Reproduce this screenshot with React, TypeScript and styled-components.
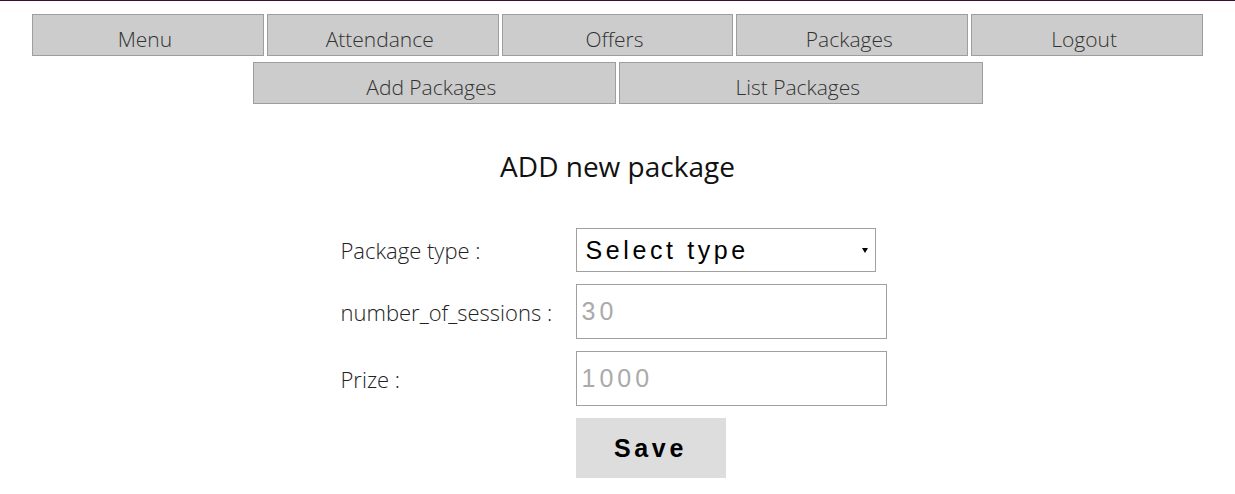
import React from 'react';
import styled, { createGlobalStyle } from 'styled-components';

const GlobalStyle = createGlobalStyle`
  html, body {
    margin: 0;
    padding: 0;
    background: #fff;
  }
  body {
    border-top: 1px solid #3a1030;
    font-family: "Open Sans", "Liberation Sans", sans-serif;
  }
`;

const Page = styled.div`
  display: flex;
  flex-direction: column;
  align-items: center;
  padding-top: 13px;
`;

const NavRow = styled.nav`
  display: flex;
  gap: 3px;
  justify-content: center;
  margin-bottom: 6px;
`;

const NavButton = styled.a<{ $wide?: boolean }>`
  align-items: center;
  background-color: #cccccc;
  border: 1px solid #9e9e9e;
  box-sizing: border-box;
  color: #333;
  cursor: pointer;
  display: flex;
  font-size: 21px;
  font-weight: 300;
  height: 42px;
  justify-content: center;
  padding: 8px 6px 0 0;
  width: ${(p) => (p.$wide ? '363.5px' : '231.8px')};
`;

const Title = styled.h2`
  color: #111;
  font-size: 28px;
  font-weight: 400;
  margin: 37px 0 0;
  text-align: center;
`;

const Form = styled.form`
  display: grid;
  grid-template-columns: 235px 311px;
  row-gap: 12px;
  margin: 43px 8px 0 0;
  align-items: center;
`;

const Label = styled.label`
  color: #222;
  font-size: 22px;
  font-weight: 300;
`;

const SelectWrap = styled.div`
  position: relative;
  width: 300px;

  &::after {
    border-left: 3px solid transparent;
    border-right: 3px solid transparent;
    border-top: 5px solid #000;
    content: '';
    pointer-events: none;
    position: absolute;
    right: 8px;
    top: 20px;
  }
`;

const Select = styled.select`
  appearance: none;
  background: #fff;
  border: 1px solid #a0a0a0;
  border-radius: 0;
  box-sizing: border-box;
  color: #000;
  display: block;
  font-family: "Liberation Sans", Arial, sans-serif;
  font-size: 25px;
  height: 44px;
  letter-spacing: 3.6px;
  padding: 0 0 0 9px;
  width: 100%;
`;

const Input = styled.input`
  border: 1px solid #a0a0a0;
  box-sizing: border-box;
  font-family: "Liberation Sans", Arial, sans-serif;
  font-size: 25px;
  height: 55px;
  letter-spacing: 4px;
  padding: 0 5px;
  width: 311px;

  &::placeholder {
    color: #aaa;
  }
`;

const SaveButton = styled.button`
  background-color: #dddddd;
  border: none;
  color: #000;
  cursor: pointer;
  font-family: "Liberation Sans", Arial, sans-serif;
  font-size: 25px;
  font-weight: 700;
  height: 60px;
  letter-spacing: 3.6px;
  width: 150px;
`;

const mainLinks = ['Menu', 'Attendance', 'Offers', 'Packages', 'Logout'];
const subLinks = ['Add Packages', 'List Packages'];

export default function App() {
  return (
    <>
      <GlobalStyle />
      <Page>
        <NavRow>
          {mainLinks.map((l) => (
            <NavButton key={l}>{l}</NavButton>
          ))}
        </NavRow>
        <NavRow>
          {subLinks.map((l) => (
            <NavButton key={l} $wide>
              {l}
            </NavButton>
          ))}
        </NavRow>
        <Title>ADD new package</Title>
        <Form onSubmit={(e) => e.preventDefault()}>
          <Label>Package type :</Label>
          <SelectWrap>
            <Select defaultValue="">
              <option value="" disabled>
                Select type
              </option>
              <option value="monthly">Monthly</option>
              <option value="yearly">Yearly</option>
            </Select>
          </SelectWrap>
          <Label>number_of_sessions :</Label>
          <Input type="text" placeholder="30" />
          <Label>Prize :</Label>
          <Input type="text" placeholder="1000" />
          <span />
          <div>
            <SaveButton type="submit">Save</SaveButton>
          </div>
        </Form>
      </Page>
    </>
  );
}
